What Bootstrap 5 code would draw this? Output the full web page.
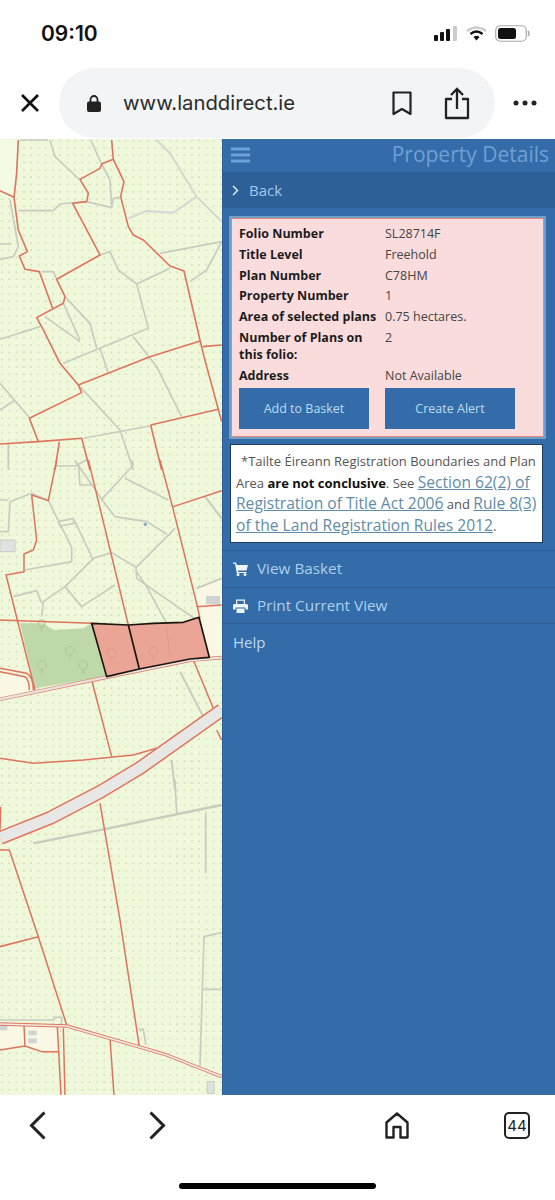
<!DOCTYPE html>
<html lang="en">
<head>
<meta charset="UTF-8">
<meta name="viewport" content="width=device-width, initial-scale=1.0">
<title>Property Details</title>
<link href="https://cdn.jsdelivr.net/npm/bootstrap@5.3.0/dist/css/bootstrap.min.css" rel="stylesheet">
<style>
body { width: 555px; height: 1200px; overflow: hidden; background: #fff; font-family: "Open Sans", sans-serif; }
.status-strip { height: 67px; padding: 0 24px 0 41px; }
.clock { font-family: Inter, "Liberation Sans", sans-serif; font-size: 21px; font-weight: 600; color: #111; }
.status-icons { gap: 8px; }
.browser-strip { height: 72px; padding-bottom: 0; }
.close-slot { width: 59px; }
.url-pill { width: 436px; height: 70px; border-radius: 35px; background: #f3f4f6; padding: 0 25px 0 28px; }
.url-text { font-family: Inter, "Liberation Sans", sans-serif; font-size: 20.3px; color: #2b2b2b; margin-left: 22px; }
.more-slot { width: 60px; }
.main-area { height: 956px; }
.map-pane { width: 222px; background: #f0f8dc; overflow: hidden; }
.map-pane svg { display: block; filter: blur(.4px); }
.side-panel { width: 333px; background: #336ca8; border-left: 1px solid #2a5f98; }
.panel-head { height: 33px; padding: 0 6px 2px 8px; color: #6fa0d6; font-size: 21px; }
.back-row { height: 36px; background: #2d6096; color: #a3c8ea; font-size: 15px; padding-left: 9px; gap: 10px; }
.detail-box { margin: 9px 10px 0 7px; height: 221px; background: #fbdcdc; border: 2px solid #ee8080; outline: 2px solid #6d9fc9; outline-offset: -1px; padding: 7px 7px; font-size: 12.5px; color: #333; }
.detail-rows { --bs-table-bg: transparent; margin: 0; }
.detail-rows th, .detail-rows td { padding: 0; line-height: 16.8px; padding-bottom: 4px; font-size: 12.5px; color: #444; background: transparent; vertical-align: top; }
.detail-rows th { width: 146px; font-weight: 700; color: #1c1c1c; }
.box-btn { width: 130px; height: 41px; border: 0; border-radius: 0; background: #336ca8; color: #bcdcf6; font-size: 12.5px; padding: 0; }
.box-btn:hover { background: #336ca8; color: #bcdcf6; }
.notice-box { margin: 6px 12px 0 7px; height: 99px; background: #fff; border: 1px solid #1d3c5c; padding: 6px 5px; font-size: 13px; line-height: 21.6px; color: #555; white-space: nowrap; }
.notice-box b { color: #111; }
.notice-box a { color: #5f8ca8; font-size: 15.6px; line-height: 1; }
.first-line { padding-left: 5px; }
.menu-list { margin-top: 7px; --bs-list-group-bg: transparent; }
.menu-list .list-group-item { height: 36.7px; background: transparent; border: 0; border-top: 1px solid #2d6096; border-radius: 0; padding: 0 0 0 10px; color: #aecfef; font-size: 15.3px; gap: 9px; }
.menu-list .list-group-item.help-row { color: #bcd8f2; font-size: 15px; }
.tool-row { height: 60px; }
.back-chev { margin-left: 29px; }
.fwd-chev { margin-left: 103px; }
.home-ico { margin-left: 219px; }
.home-pill { width: 197px; height: 6px; background: #000; border-radius: 3px; margin: 28px 0 0 179px; }
.tab-count { width: 26px; height: 27px; border: 2px solid #222; border-radius: 5px; font-family: Inter, "Liberation Sans", sans-serif; font-size: 15px; line-height: 23px; text-align: center; color: #222; margin-left: 95px; }
</style>
</head>
<body>
<!-- phone status bar -->
<div class="status-strip d-flex align-items-center justify-content-between">
  <span class="clock">09:10</span>
  <div class="status-icons d-flex align-items-center">
    <svg width="24" height="15" viewBox="0 0 24 15"><rect x="0" y="9" width="4" height="6" rx="1" fill="#111"/><rect x="6" y="6" width="4" height="9" rx="1" fill="#111"/><rect x="12" y="3" width="4" height="12" rx="1" fill="#111"/><rect x="19" y="0" width="4" height="15" rx="1" fill="#ccc"/></svg>
    <svg width="21" height="15" viewBox="0 0 21 15"><path d="M1 5 Q10.500 -2 20 5" fill="none" stroke="#ccc" stroke-width="2.500"/><path d="M4.500 8 Q10.500 3 16.500 8" fill="none" stroke="#111" stroke-width="2.500"/><path d="M7.500 11 Q10.500 8.500 13.500 11 L10.500 14.500Z" fill="#111"/></svg>
    <svg width="36" height="17" viewBox="0 0 36 17"><rect x=".75" y=".75" width="30.500" height="15.500" rx="4.500" fill="#fff" stroke="#aaa" stroke-width="1.200"/><rect x="3" y="3" width="18" height="11" rx="2.500" fill="#111"/><path d="M33 6 Q35 8.500 33 11" fill="none" stroke="#aaa" stroke-width="1.500"/></svg>
  </div>
</div>

<!-- browser url bar -->
<div class="browser-strip d-flex align-items-center">
  <div class="close-slot d-flex justify-content-center">
    <svg width="20" height="20" viewBox="0 0 20 20"><path d="M2 2 L18 18 M18 2 L2 18" stroke="#111" stroke-width="2.700"/></svg>
  </div>
  <div class="url-pill d-flex align-items-center">
    <svg width="14" height="17" viewBox="0 0 14 17"><path d="M3.500 7 V4.500 a3.500 3.500 0 0 1 7 0 V7" fill="none" stroke="#222" stroke-width="1.800"/><rect x="0" y="6.500" width="14" height="10.500" rx="2" fill="#222"/></svg>
    <span class="url-text flex-grow-1">www.landdirect.ie</span>
    <svg class="me-4" width="20" height="25" viewBox="0 0 20 25"><path d="M1.500 1.500 H18.500 V23 L10 18 L1.500 23Z" fill="none" stroke="#222" stroke-width="2.200" stroke-linejoin="round"/></svg>
    <svg class="ms-2" width="26" height="33" viewBox="0 0 26 33"><path d="M8 12 H2 V31 H24 V12 H18" fill="none" stroke="#222" stroke-width="2.300" stroke-linejoin="round"/><path d="M13 22 V2 M7 8 L13 2 L19 8" fill="none" stroke="#222" stroke-width="2.300"/></svg>
  </div>
  <div class="more-slot d-flex justify-content-center">
    <svg width="24" height="6" viewBox="0 0 24 6"><circle cx="3" cy="3" r="2.500" fill="#222"/><circle cx="12" cy="3" r="2.500" fill="#222"/><circle cx="21" cy="3" r="2.500" fill="#222"/></svg>
  </div>
</div>

<div class="main-area d-flex">
  <!-- map: groups use 3x coordinates per section of the sheet -->
  <div class="map-pane">
    <svg width="222" height="956" viewBox="0 139 222 956">
      <defs>
        <pattern id="dotGrid" width="7.300" height="7.300" patternUnits="userSpaceOnUse">
          <circle cx="2" cy="2" r=".8" fill="#c9d6ae"/>
        </pattern>
      </defs>
      <rect x="0" y="139" width="222" height="956" fill="#f0f8db"/>
      <rect x="0" y="139" width="222" height="956" fill="url(#dotGrid)"/>

      <!-- upper sheet -->
      <g transform="translate(0,140) scale(.3333)" fill="none" stroke-linejoin="round">
        <path d="M0 0 H52 L42 172 L0 152Z" fill="#f4fbe4" stroke="none"/>
        <g stroke="#c8ccc0" stroke-width="5">
          <path d="M150 0 L165 50 L240 120 M272 0 L305 72 L330 120 L335 200"/>
          <path d="M55 212 H160 L180 192 L260 185 L335 203 L340 175 L362 172"/>
          <path d="M385 235 L440 213 L520 218 L590 170 M470 0 L510 40 L590 170 L665 245" stroke="#d2d8d2" stroke-width="6"/>
          <path d="M480 340 L665 305 L620 390 L570 425"/>
          <path d="M410 432 L510 385 M300 345 L330 335 L355 390 L410 432 L445 565 L190 670"/>
          <path d="M300 625 L325 700 M400 590 L470 680 L545 830"/>
          <path d="M195 470 L270 550 L290 625 M135 530 L240 605 M190 490 L240 600"/>
          <path d="M0 598 L120 560 M240 740 L360 870 L400 990 M250 895 L450 858"/>
          <path d="M0 730 L60 800 L90 835 M0 810 L45 780 M30 180 L55 320 L40 350 L0 358 M0 312 H35"/>
          <path d="M25 912 V990 M165 978 H225 L260 960 M125 395 H160 L170 418 M60 0 L145 0"/>
        </g>
        <g stroke="#e0735c" stroke-width="4.800">
          <path d="M335 0 L340 58 L305 72 L300 85 L240 118 L265 160 L260 185 L218 190 L300 345 L170 418 L195 470 L190 490 L110 533 L130 570 L180 670 L235 735 L245 758 L88 835 L115 905"/>
          <path d="M340 58 L372 125 L362 170 L385 260 L400 285 L430 300 L510 378 L552 393 L600 600 L612 650 L665 845"/>
          <path d="M55 0 L50 100 L42 172 L0 152 M42 172 L55 270 L82 335 L58 348 L75 388 L118 395 L158 505"/>
          <path d="M235 735 L450 650 L600 603 M608 620 L665 615 M452 855 L655 808 M452 855 L485 990"/>
          <path d="M0 912 L115 905 L245 895 L270 990 M178 905 L165 990"/>
        </g>
      </g>

      <!-- middle sheet, the selected plans -->
      <g transform="translate(0,460) scale(.3333)" fill="none" stroke-linejoin="round">
        <path d="M585 390 L665 355 V590 L630 590 L597 472Z" fill="#faf7e4"/>
        <path d="M0 640 L80 650 L100 690 L0 715Z" fill="#faf7e4"/>
        <path d="M60 490 L130 490 L160 510 L250 505 L275 490 L320 650 L105 685Z" fill="#bfd8a9"/>
        <g stroke="#a9c59a" stroke-width="3">
          <circle cx="125" cy="615" r="13"/><path d="M125 628 V645"/>
          <circle cx="210" cy="572" r="13"/><path d="M210 585 V600"/>
          <circle cx="250" cy="615" r="13"/><path d="M250 628 V642"/>
          <circle cx="125" cy="490" r="11"/><path d="M125 501 V515"/>
        </g>
        <g stroke="#c8ccc0" stroke-width="5">
          <path d="M395 0 L400 15 L305 118 L345 170 L440 185 L500 222 M375 55 L505 120 M305 118 L280 80 L230 10 L225 0"/>
          <path d="M525 205 L408 322 L335 278 L280 295 L195 380 L245 440 L345 375 M408 322 L410 355 L590 480 M410 335 L440 380 L500 490"/>
          <path d="M145 122 L215 262 L215 305 L75 330 M235 10 L240 75 L275 75 M225 185 L280 300 M195 380 L130 425 L125 470 M40 410 L110 392 L125 430"/>
          <path d="M145 122 L95 100 L30 125 L25 215 H0 M0 120 H25 M175 185 L220 175 L222 190 L180 198Z"/>
          <path d="M615 110 L665 175 M590 385 L665 355 M540 635 L610 770 M515 900 L525 990" stroke-width="6"/>
        </g>
        <rect x="0" y="240" width="45" height="35" fill="#dfe3df" stroke="#c8ccc0" stroke-width="3"/>
        <rect x="618" y="408" width="42" height="25" fill="#cfd4d0"/>
        <circle cx="436" cy="193" r="5" fill="#7fa4bc"/>
        <g stroke="#e0735c" stroke-width="4.500">
          <path d="M265 0 L385 495 M480 0 L515 130 L590 430 L600 475 M520 140 L665 92"/>
          <path d="M170 0 L145 122 L95 105 L110 240 L100 270 L72 282 L72 335 L18 345 L105 690"/>
          <path d="M0 480 L275 490 M590 440 L665 435 M580 600 L640 745 M650 810 L665 840 M275 660 L335 890"/>
          <path d="M0 895 L100 910 L250 900 L400 885 L470 865"/>
          <path d="M0 625 L80 640 Q100 650 100 690 M0 635 L75 650 Q88 660 88 690"/>
        </g>
        <path d="M0 718 L280 660 L575 600 L665 593" stroke="#e0735c" stroke-width="11"/>
        <path d="M0 718 L280 660 L575 600 L665 593" stroke="#e6e4df" stroke-width="7"/>
        <path d="M275 490 L385 495 L460 490 L550 487 L597 472 L628 592 L570 597 L418 627 L320 650Z" fill="#eaa596" stroke="#1c1410" stroke-width="5"/>
        <path d="M385 495 L418 627" stroke="#1c1410" stroke-width="5"/>
        <g stroke="#dd9a88" stroke-width="3">
          <circle cx="335" cy="578" r="13"/><path d="M335 591 V606"/>
          <circle cx="460" cy="575" r="13"/><path d="M460 588 V602"/>
          <path d="M500 500 L510 590"/>
        </g>
      </g>

      <!-- motorway across the middle and lower sheets -->
      <g fill="none" stroke-linejoin="round">
        <path d="M0 838 L50 818 L100 792 L140 768 L222 710" stroke="#e0735c" stroke-width="14"/>
        <path d="M0 838 L50 818 L100 792 L140 768 L222 710" stroke="#e7e7e6" stroke-width="11"/>
      </g>

      <!-- lower sheet -->
      <g transform="translate(0,780) scale(.3333)" fill="none" stroke-linejoin="round">
        <path d="M0 735 H175 V812 L125 815 L75 798 L0 810Z" fill="#faf7e4"/>
        <g stroke="#c8ccc0" stroke-width="5">
          <path d="M100 190 L310 148 L665 75" stroke-width="7"/>
          <path d="M525 0 L530 100 M617 100 V280 M665 458 L612 470 L600 860 M610 628 H665 M415 748 H430 L438 795"/>
          <path d="M0 720 H160 L165 712 H185 V735"/>
        </g>
        <rect x="85" y="752" width="25" height="14" fill="#cfd4d0"/><rect x="85" y="775" width="25" height="15" fill="#cfd4d0"/>
        <rect x="0" y="735" width="22" height="16" fill="#cfd4d0"/><rect x="622" y="905" width="20" height="35" fill="#dfe3df" stroke="#c8ccc0" stroke-width="3"/>
        <g stroke="#e0735c" stroke-width="4.500">
          <path d="M300 70 L360 420 L418 800 M28 210 L115 470 L200 735 M0 210 H28 M0 500 L115 470 M0 150 L2 80"/>
          <path d="M72 735 L75 800 M0 810 L75 798 L125 815 L178 815 M172 740 L183 945 M190 745 L195 945 M330 775 L342 945"/>
        </g>
        <path d="M0 732 L200 738 L415 800 L500 825 L665 890" stroke="#e0735c" stroke-width="10"/>
        <path d="M0 732 L200 738 L415 800 L500 825 L665 890" stroke="#ecebe4" stroke-width="5"/>
      </g>
    </svg>
  </div>

  <!-- property panel -->
  <div class="side-panel">
    <div class="panel-head d-flex align-items-center justify-content-between">
      <svg width="19" height="16" viewBox="0 0 19 16"><path d="M0 2 H19 M0 8 H19 M0 14 H19" stroke="#6fa0d6" stroke-width="3"/></svg>
      <span>Property Details</span>
    </div>
    <div class="back-row d-flex align-items-center">
      <svg width="7" height="11" viewBox="0 0 7 11"><path d="M1 1 L5.500 5.500 L1 10" fill="none" stroke="#d6e8f8" stroke-width="1.500"/></svg>
      <span>Back</span>
    </div>
    <div class="detail-box">
      <table class="table table-borderless detail-rows">
        <tr><th>Folio Number</th><td>SL28714F</td></tr>
        <tr><th>Title Level</th><td>Freehold</td></tr>
        <tr><th>Plan Number</th><td>C78HM</td></tr>
        <tr><th>Property Number</th><td>1</td></tr>
        <tr><th>Area of selected plans</th><td>0.75 hectares.</td></tr>
        <tr><th>Number of Plans on this folio:</th><td>2</td></tr>
        <tr><th>Address</th><td>Not Available</td></tr>
      </table>
      <div class="d-flex gap-3">
        <button type="button" class="btn box-btn">Add to Basket</button>
        <button type="button" class="btn box-btn">Create Alert</button>
      </div>
    </div>
    <div class="notice-box">
      <div class="first-line">*Tailte Éireann Registration Boundaries and Plan</div>
      <div>Area <b>are not conclusive</b>. See <a href="#">Section 62(2) of</a></div>
      <div><a href="#">Registration of Title Act 2006</a> and <a href="#">Rule 8(3)</a></div>
      <div><a href="#">of the Land Registration Rules 2012</a>.</div>
    </div>
    <div class="list-group menu-list">
      <a href="#" class="list-group-item d-flex align-items-center">
        <svg width="15" height="14" viewBox="0 0 15 14"><path d="M0 0.500 H3 L4 3 H15 L13.500 8.500 H5 L5.300 10 H13.500 V11 H3.800 L2 1.800 H0Z" fill="#eef6fc"/><circle cx="5" cy="12.500" r="1.500" fill="#eef6fc"/><circle cx="12" cy="12.500" r="1.500" fill="#eef6fc"/></svg>
        <span>View Basket</span>
      </a>
      <a href="#" class="list-group-item d-flex align-items-center">
        <svg width="15" height="14" viewBox="0 0 15 14"><path d="M3 5 V0.500 H12 V5 H10.800 V1.800 H4.200 V5Z" fill="#eef6fc"/><path d="M1.500 5 H13.500 Q15 5 15 6.500 V10.500 H12.500 V8.500 H2.500 V10.500 H0 V6.500 Q0 5 1.500 5Z" fill="#eef6fc"/><rect x="3.500" y="9.500" width="8" height="4.500" fill="#eef6fc"/></svg>
        <span>Print Current View</span>
      </a>
      <a href="#" class="list-group-item help-row d-flex align-items-center">Help</a>
    </div>
  </div>
</div>

<!-- browser toolbar -->
<div class="tool-row d-flex align-items-center">
  <svg class="back-chev" width="17" height="29" viewBox="0 0 17 29"><path d="M15.500 1.500 L2.500 14.500 L15.500 27.500" fill="none" stroke="#222" stroke-width="3"/></svg>
  <svg class="fwd-chev" width="17" height="29" viewBox="0 0 17 29"><path d="M1.500 1.500 L14.500 14.500 L1.500 27.500" fill="none" stroke="#222" stroke-width="3"/></svg>
  <svg class="home-ico" width="24" height="27" viewBox="0 0 24 27"><path d="M1.500 25.500 V10.500 L12 1.500 L22.500 10.500 V25.500 H15.500 V15 H8.500 V25.500Z" fill="none" stroke="#222" stroke-width="2.400" stroke-linejoin="round"/></svg>
  <div class="tab-count">44</div>
</div>
<div class="home-pill"></div>
<script src="https://cdn.jsdelivr.net/npm/bootstrap@5.3.0/dist/js/bootstrap.bundle.min.js"></script>
</body>
</html>
